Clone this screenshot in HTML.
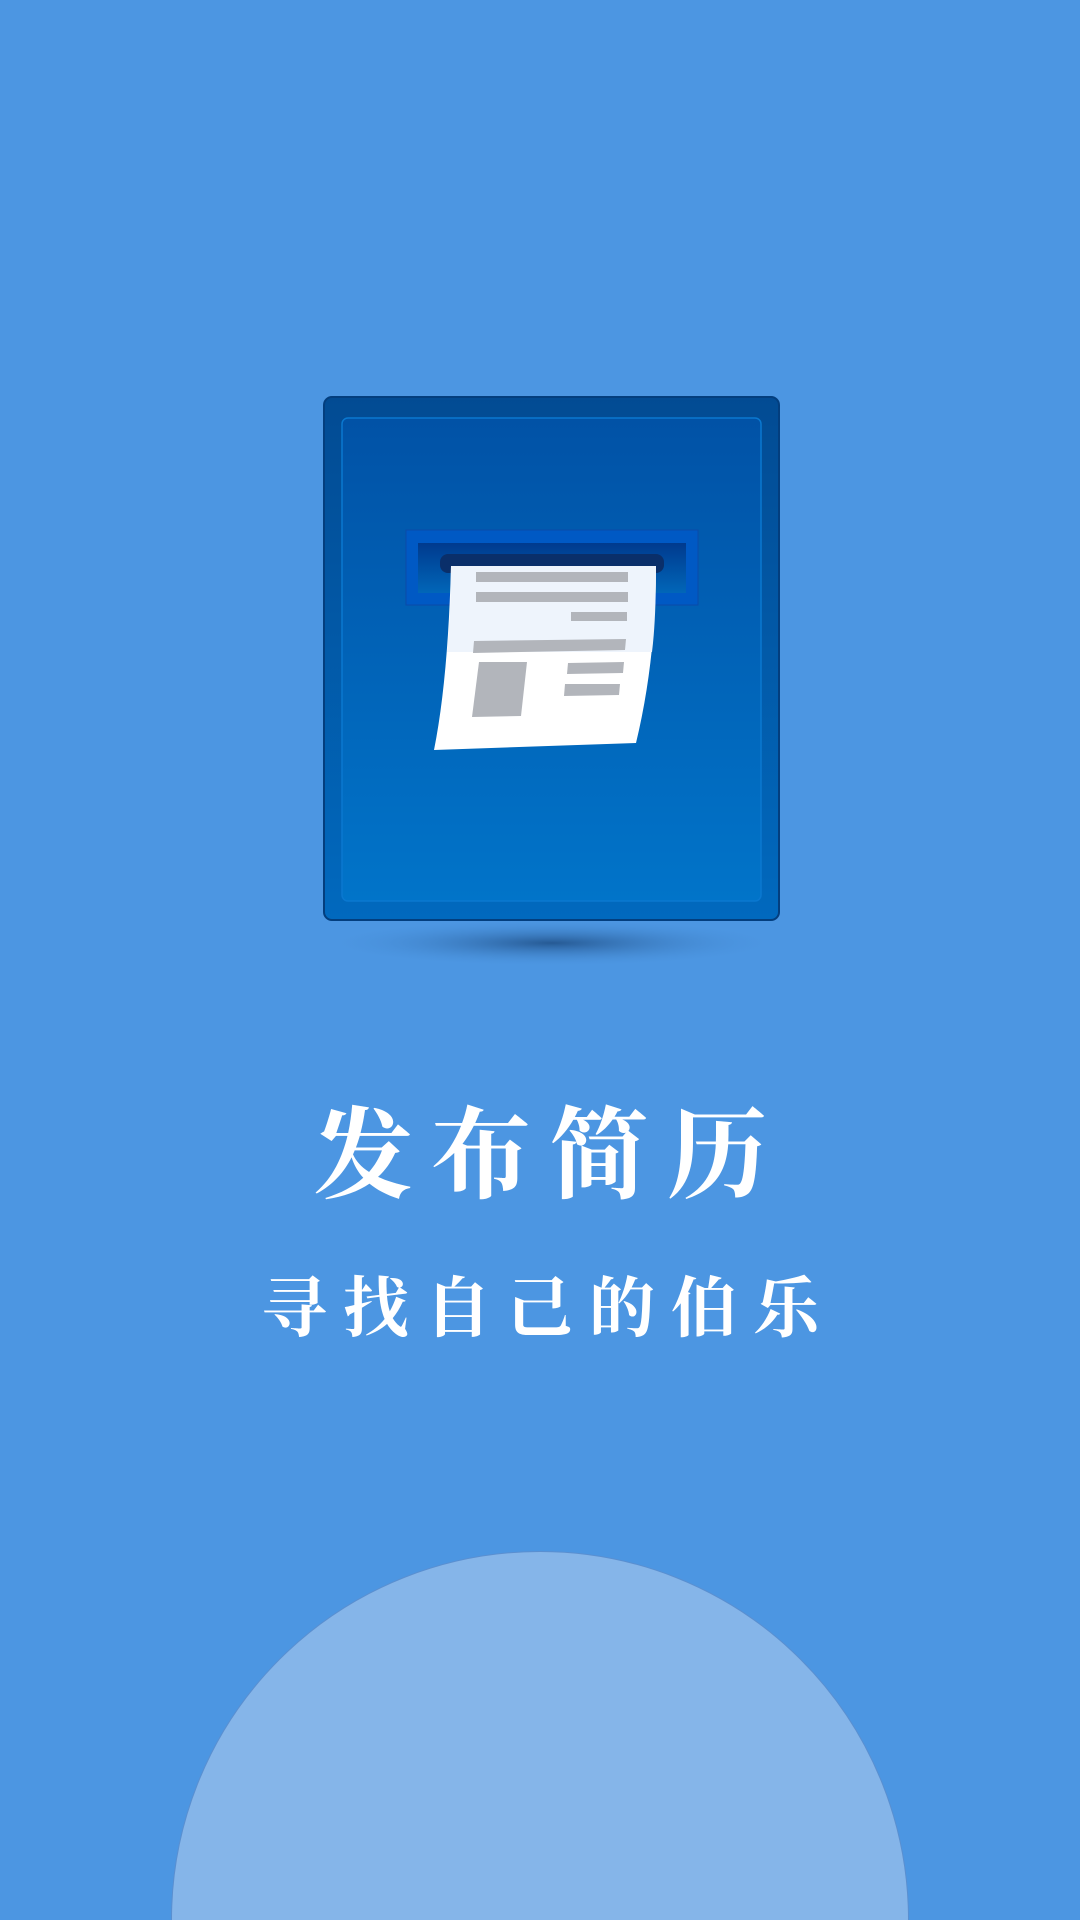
<!DOCTYPE html>
<html style="width:1080px;height:1920px;overflow:hidden"><head><meta charset="utf-8"><style>
html,body{margin:0;padding:0}
body{width:1080px;height:1920px;background:#4c96e2;position:relative;overflow:hidden;font-family:"Liberation Serif","Noto Serif CJK SC",serif}
.t{position:absolute;left:0;width:1080px;text-align:center;color:#fff;font-weight:bold}
</style></head><body>
<svg width="1080" height="1100" style="position:absolute;left:0;top:0">
<defs>
<linearGradient id="g" x1="0" y1="0" x2="0" y2="1"><stop offset="0" stop-color="#0152a6"/><stop offset="1" stop-color="#0174c9"/></linearGradient>
<linearGradient id="go" x1="0" y1="0" x2="0" y2="1"><stop offset="0" stop-color="#024b93"/><stop offset="1" stop-color="#0169be"/></linearGradient>
<radialGradient id="sh" cx="0.5" cy="0.5" r="0.5"><stop offset="0" stop-color="#1f4f86" stop-opacity="0.85"/><stop offset="1" stop-color="#4c96e2" stop-opacity="0"/></radialGradient>
<linearGradient id="sl" x1="0" y1="0" x2="0" y2="1"><stop offset="0" stop-color="#003a8e"/><stop offset="1" stop-color="#0166b8"/></linearGradient>
</defs>
<ellipse cx="552" cy="943" rx="230" ry="24" fill="url(#sh)"/>
<rect x="324" y="397" width="455" height="523" rx="8" fill="url(#go)" stroke="#033e7e" stroke-width="2"/>
<rect x="342" y="418" width="419" height="483" rx="6" fill="url(#g)" stroke="#0a78d0" stroke-width="1.5"/>
<rect x="406" y="530" width="292" height="75" fill="#0059c4" stroke="#0a4aa8" stroke-width="1"/>
<rect x="418" y="543" width="268" height="50" fill="url(#sl)"/>
<rect x="440" y="554" width="224" height="19" rx="8" fill="#0a2f6a"/>
<path d="M451 566 L656 566 Q656 660 636 743 L434 750 Q448 680 451 566 Z" fill="#fff"/>
<path d="M451 566 L656 566 Q656 620 652 652 L447 652 Q451 610 451 566 Z" fill="#eef4fc"/>
<g fill="#b2b5bb">
<rect x="476" y="572" width="152" height="10"/>
<rect x="476" y="592" width="152" height="10"/>
<rect x="571" y="612" width="56" height="9"/>
<polygon points="474,641 626,639 625,650 473,653"/>
<polygon points="568,663 624,662 623,673 567,674"/>
<polygon points="565,684 620,684 619,695 564,696"/>
<polygon points="479,662 527,662 521,716 472,717"/>
</g>
</svg>
<div class="t" style="top:1092px;font-size:100px;letter-spacing:18px;text-indent:18px;line-height:130px">发布简历</div>
<div class="t" style="top:1265px;font-size:66px;letter-spacing:16px;text-indent:16px;line-height:90px">寻找自己的伯乐</div>
<div style="position:absolute;left:171px;top:1551px;width:738px;height:369px;overflow:hidden"><div style="width:738px;height:738px;border-radius:50%;background:#85b5e9;box-sizing:border-box;border:1px solid #5a8fd0"></div></div>
</body></html>
